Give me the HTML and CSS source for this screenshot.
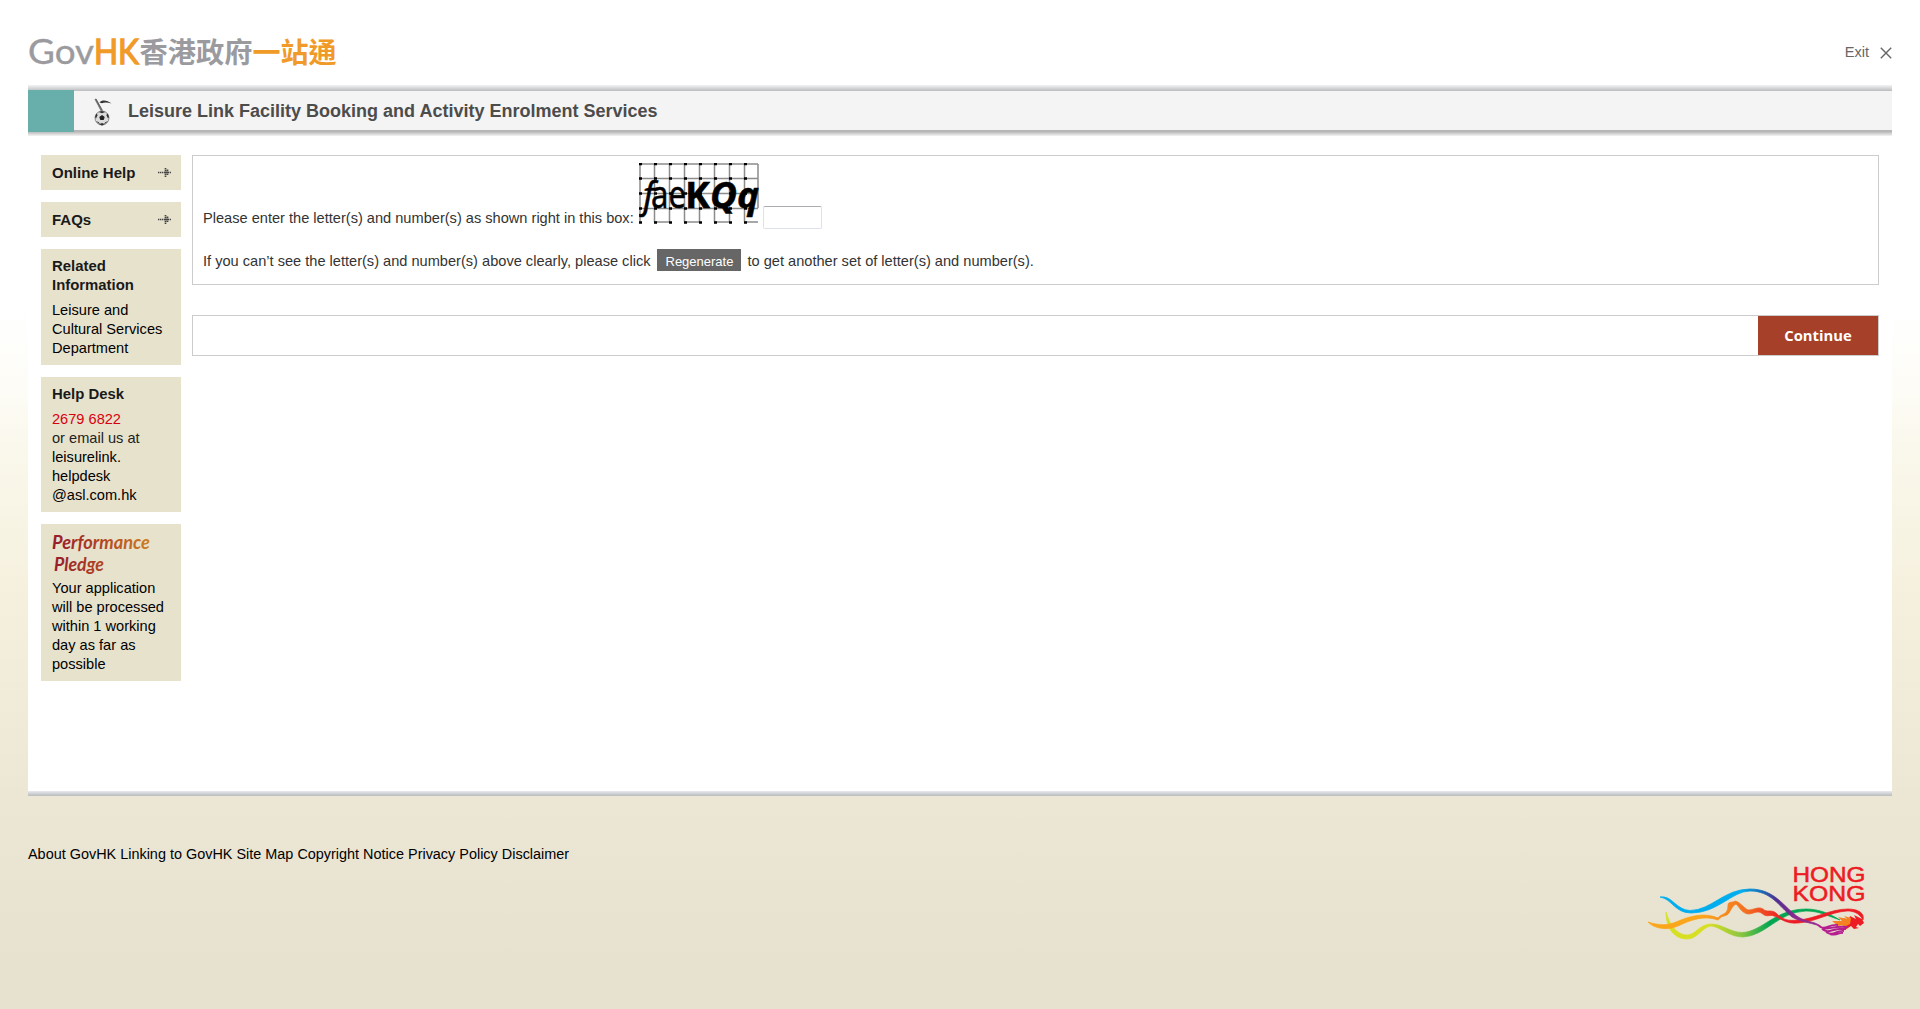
FILE: index.html
```
<!DOCTYPE html>
<html lang="en">
<head>
<meta charset="utf-8">
<title>Leisure Link Facility Booking and Activity Enrolment Services</title>
<link rel="stylesheet" href="styles.css">
</head>
<body>
<div class="page">
  <header class="top">
    <svg class="logo" width="320" height="60" viewBox="0 -10 320 60" role="img" aria-label="GovHK">
      <text class="logo-latin" x="0" y="31" textLength="66" lengthAdjust="spacingAndGlyphs">Gov</text>
      <text class="logo-hk" x="66" y="31" textLength="45" lengthAdjust="spacingAndGlyphs">HK</text>
      <text class="logo-cjk" x="111.500" y="29.500" textLength="113" lengthAdjust="spacingAndGlyphs">香港政府</text>
      <text class="logo-cjk accent" x="224.500" y="29.500" textLength="84" lengthAdjust="spacingAndGlyphs">一站通</text>
    </svg>
    <a class="exit">Exit
      <svg width="12" height="12" viewBox="0 0 12 12"><path d="M.8.8 11.2 11.2M11.2.8.8 11.2" stroke="#666" stroke-width="1.4"/></svg>
    </a>
  </header>
  <div class="edge edge-top"></div>
  <div class="titlebar">
    <div class="teal"></div>
    <div class="title-main">
      <svg class="service-icon" width="18" height="28" viewBox="0 0 18 28">
        <path d="M.5 1.2 2 .5 8.500 12.500 7 13.500z" fill="#777"/>
        <path d="M2 1 8.500 12.500" stroke="#444" stroke-width=".7"/>
        <path d="M5.500 4.500C8 1.500 13 2 17.500 5.500 14 4.300 10 4.300 8 5.200Z" fill="#333"/>
        <circle cx="8" cy="20" r="7" fill="#dcdcdc" stroke="#777" stroke-width=".8"/>
        <path d="M8 17 10.700 18.900 9.700 22H6.300L5.300 18.900Z" fill="#222"/>
        <path d="M4.600 14 8 12.900 11.400 14 8 15.300ZM1 19 2.300 15.500 3.700 17 2 20.500ZM15 19 13.700 15.500 12.300 17 14 20.500ZM1.800 23 4.800 24.200 6.500 27ZM14.200 23 11.200 24.200 9.500 27ZM5 26.300 8 25 11 26.300 8 27.500Z" fill="#333"/>
      </svg>
      <h1>Leisure Link Facility Booking and Activity Enrolment Services</h1>
    </div>
  </div>
  <div class="edge edge-bottom"></div>
  <div class="body">
    <aside class="side">
      <a class="box link">Online Help
        <svg class="arrow" width="13" height="11" viewBox="0 0 13 11"><path d="M0 5.500H13" stroke="#444" stroke-width="1.600" stroke-dasharray="1.400 .6"/><path d="M7.500 1V10M9.500 2.500V8.500" stroke="#444" stroke-width="1.700" stroke-dasharray="1.500 .5"/></svg>
      </a>
      <a class="box link">FAQs
        <svg class="arrow" width="13" height="11" viewBox="0 0 13 11"><path d="M0 5.500H13" stroke="#444" stroke-width="1.600" stroke-dasharray="1.400 .6"/><path d="M7.500 1V10M9.500 2.500V8.500" stroke="#444" stroke-width="1.700" stroke-dasharray="1.500 .5"/></svg>
      </a>
      <section class="box">
        <h2>Related Information</h2>
        <p>Leisure and Cultural Services Department</p>
      </section>
      <section class="box">
        <h2>Help Desk</h2>
        <p><span class="phone">2679 6822</span><br><span class="soft">or email us at</span><br>leisurelink.<br>helpdesk<br>@asl.com.hk</p>
      </section>
      <section class="box pledge">
        <svg width="105" height="47" viewBox="0 0 105 47">
          <defs><linearGradient id="ink" gradientUnits="userSpaceOnUse" x1="0" y1="0" x2="99" y2="0"><stop offset="0" stop-color="#961c2c"/><stop offset=".5" stop-color="#b04422"/><stop offset="1" stop-color="#cf7f22"/></linearGradient></defs>
          <text class="script" x="0" y="17" textLength="98" lengthAdjust="spacingAndGlyphs">Performance</text>
          <text class="script" x="2" y="39" textLength="50" lengthAdjust="spacingAndGlyphs">Pledge</text>
        </svg>
        <p>Your application will be processed within 1 working day as far as possible</p>
      </section>
    </aside>
    <main class="content">
      <form class="panel">
        <div class="row first">
          <label for="code">Please enter the letter(s) and number(s) as shown right in this box:</label>
          <svg class="captcha" width="120" height="61" viewBox="0 0 120 61">
            <path class="grid" d="M1 1H119M1 15.500H119M1 30.500H119M1 45.500H119M1 1V59M15.500 1V59M30.500 1V59M45.500 1V59M60.500 1V59M75.500 1V59M90.500 1V59M105.500 1V59M119 1V45M16 59H30M45 59H60M75 59H90M105 59H119"/>
            <path class="knots" d="M0 1H120M0 15.500H120M0 30.500H120M0 45.500H120M0 59.500H120"/>
            <text class="cap" x="4" y="44.500" font-style="italic" textLength="11" lengthAdjust="spacingAndGlyphs">f</text>
            <text class="cap wide" x="12" y="44.500" textLength="35" lengthAdjust="spacingAndGlyphs">ae</text>
            <text class="cap heavy" x="46" y="44.500" textLength="25" lengthAdjust="spacingAndGlyphs">K</text>
            <text class="cap heavy" x="71" y="44.500" font-style="italic" textLength="49" lengthAdjust="spacingAndGlyphs">Qq</text>
          </svg>
          <input id="code" class="code" type="text">
        </div>
        <div class="row second">
          <span>If you can’t see the letter(s) and number(s) above clearly, please click</span>
          <button type="button" class="regen">Regenerate</button>
          <span>to get another set of letter(s) and number(s).</span>
        </div>
      </form>
      <div class="actions"><button class="continue">Continue</button></div>
    </main>
  </div>
  <div class="edge edge-end"></div>
  <footer class="foot">
    <nav><a>About GovHK</a> <a>Linking to GovHK</a> <a>Site Map</a> <a>Copyright Notice</a> <a>Privacy Policy</a> <a>Disclaimer</a></nav>
    <svg class="brand" width="240" height="90" viewBox="0 0 240 90" role="img" aria-label="Hong Kong">
      <defs>
        <linearGradient id="blue" gradientUnits="userSpaceOnUse" x1="20" y1="0" x2="182" y2="0"><stop offset=".5" stop-color="#00aeef"/><stop offset=".62" stop-color="#1670b8"/><stop offset=".72" stop-color="#50308f"/><stop offset=".85" stop-color="#92278f"/></linearGradient>
        <linearGradient id="lime" gradientUnits="userSpaceOnUse" x1="25" y1="0" x2="200" y2="0"><stop offset=".25" stop-color="#d7df23"/><stop offset=".43" stop-color="#8dc63f"/><stop offset=".6" stop-color="#00a651"/></linearGradient>
        <linearGradient id="sun" gradientUnits="userSpaceOnUse" x1="8" y1="0" x2="225" y2="0"><stop offset=".25" stop-color="#faa61a"/><stop offset=".45" stop-color="#f37021"/><stop offset=".62" stop-color="#ed1c24"/></linearGradient>
      </defs>
      <path fill="url(#lime)" stroke="url(#lime)" stroke-width=".7" d="M26 52C30 65 36 74 46 75C55 76 59 64 71 64C82 64 91 72.500 102 72.500C122 72 135 49 166 49C180 49 190 54 200 60C188 56 179 51 166 51C138 52 126 76 103 77C89 77 81 67 71 66C62 67 57 80 46 79C32 78 26 66 26 52Z"/>
      <path fill="url(#sun)" stroke="url(#sun)" stroke-width=".7" d="M8 62C20 66 29 65 36 62C50 56 64 52 78 58C81 53 88 56 88 45C88 41 93 43 95 41C100 42 104 48 108 50C114 50 118 46 123 49C127 53 131 49 136 53C143 60 148 61 158 60C175 59 190 49 208 49C218 49 225 53 223 60C219 53 214 51 207 51C190 52 176 62 158 63C146 64 142 59 134 56C130 54 127 58 122 53.500C117 50 114 54 108 54C102 53 100 48 96 44C90 47 91 55 84 56C80 57 80 59 78 60C63 55 51 60 38 66C29 70 16 70 8 62Z"/>
      <path fill="url(#blue)" stroke="url(#blue)" stroke-width=".8" d="M20 37C32 35 36 50 50 50.500C72 50 84 29 110 29C138 29 146 52 162 59C168 62 176 62 180 66C168 62 161 62 152 57C139 46 131 31 110 31C92 31 78 53 51 53C35 53 32 39 20 37Z"/>
      <path fill="#ed1c24" d="M203 58 209 60 210 56 216 59 214 55 222 59 224 63 220 66 218 64 216 67 219 68 214 69 211 66 205 70 200 70 206 66 206 62Z"/>
      <path fill="#f58220" d="M192 61 202 61 198 57 207 59 204 56 211 58 210 64 206 66 200 68 203 65 198 66Z"/>
      <path fill="none" stroke="#b41e8e" stroke-width="1.900" d="M178 65C187 73 190 65 207 67M182 69C190 75 192 67 206 69M186 72C194 77 196 70 204 71M190 74C198 76 198 72 203 73M180 67C187 70 188 64 198 65"/>
      <text class="hk" x="152.500" y="22" textLength="73" lengthAdjust="spacingAndGlyphs">HONG</text>
      <text class="hk" x="152.500" y="40.500" textLength="73" lengthAdjust="spacingAndGlyphs">KONG</text>
    </svg>
  </footer>
</div>
</body>
</html>
```
FILE: styles.css
```
* { box-sizing: border-box; }
body {
  margin: 0;
  min-height: 1009px;
  background: linear-gradient(#fff 310px, #fdfcf6 390px, #faf8ec 450px, #f6f1df 580px, #efe9d7 740px, #ece7d5 800px, #e7e1cf 960px);
  color: #333;
  font-family: "Liberation Sans", Arial, sans-serif;
  font-size: 14.6px;
  line-height: 19px;
}
h1, h2, p { margin: 0; }
.page { padding: 0 28px; }
.top { height: 85px; display: flex; justify-content: space-between; align-items: flex-start; padding-top: 23px; }
.logo { flex: none; }
.logo-latin { font: 34.500px Lato, sans-serif; fill: #9b9b9f; stroke: #9b9b9f; stroke-width: .4; }
.logo-hk { font: 34.500px Lato, sans-serif; fill: #f09a28; stroke: #f09a28; stroke-width: 1.300; }
.logo-cjk { font: bold 28px "Noto Sans CJK TC", sans-serif; fill: #9b9b9f; }
.logo-cjk.accent { fill: #f09a28; }
.exit { display: flex; align-items: center; gap: 11px; margin-top: 20px; color: #666; }
.edge { height: 5px; }
.edge-top { background: linear-gradient(#f3f4f5, #c4c5c7); }
.titlebar { display: flex; height: 42px; }
.teal { width: 46px; background: #68aeaa; }
.title-main { flex: 1; display: flex; align-items: center; background: #f4f4f4; border-top: 1px solid #bfc0c2; border-bottom: 2px solid #b7b7b7; padding-left: 20px; }
.service-icon { margin-top: 3px; }
h1 { margin-left: 16px; font-size: 18px; line-height: 22px; color: #4c4c4c; }
.edge-bottom { height: 4px; background: linear-gradient(#bcbcbc, #f4f4f4); }
.body { display: flex; gap: 11px; height: 655px; padding: 19px 13px 0; background: #fff; }
.side { width: 140px; display: flex; flex-direction: column; gap: 12px; color: #000; }
.box { background: #e7e2cc; padding: 8px 11px 7px; }
.link { height: 35px; display: flex; justify-content: space-between; align-items: center; padding: 7px 11px 8px; font-size: 15px; font-weight: bold; color: #1a1a1a; }
.arrow { margin-right: -1px; }
h2 { font-size: 14.900px; line-height: 19px; color: #1a1a1a; margin-bottom: 6px; }
.phone { color: #d7000f; }
.soft { color: #222; }
.pledge svg { display: block; }
.script { font: italic bold 18px Lato, sans-serif; fill: url(#ink); }
.content { flex: 1; }
.panel { height: 130px; border: 1px solid #ccc; padding: 7px 10px; }
.row { display: flex; }
.first { align-items: flex-end; height: 61px; }
.first label { margin-bottom: -4px; }
.captcha { margin-left: 5px; flex: none; }
.grid { fill: none; stroke: #8c8c8c; stroke-width: 1.500; }
.knots { fill: none; stroke: #000; stroke-width: 2.500; stroke-dasharray: 3 12; }
.cap { font-family: "Noto Sans", sans-serif; font-size: 36px; fill: #000; stroke: #000; stroke-width: .5; }
.wide { font-size: 38px; }
.heavy { font-weight: bold; }
.code { width: 59px; height: 23px; margin: 0 0 -5px 4px; border: 1px solid #dde1ea; border-top-color: #abadb3; border-radius: 2px; background: #fff; }
.second { margin-top: 25px; height: 22px; line-height: 24px; }
.regen { width: 84px; height: 22px; margin: 0 6px 0 7px; padding: 2px 0 0; border: 0; background: #666; color: #fff; font: 13px "Liberation Sans", Arial, sans-serif; }
.actions { display: flex; justify-content: flex-end; height: 41px; margin-top: 30px; border: 1px solid #ccc; }
.continue { width: 120px; border: 0; padding: 0 0 2px; background: #a64029; color: #fff; font: bold 14.800px "Open Sans", "Noto Sans", sans-serif; }
.edge-end { background: linear-gradient(#e8eaed, #b9babc); }
.foot { display: flex; justify-content: space-between; padding-top: 49px; color: #000; }
.foot nav { white-space: nowrap; font-size: 14.430px; }
.brand { flex: none; margin: 15px 12px 0 0; }
.hk { font: 21.500px "Liberation Sans", Arial, sans-serif; fill: #ed1c24; stroke: #ed1c24; stroke-width: .5; }
```
